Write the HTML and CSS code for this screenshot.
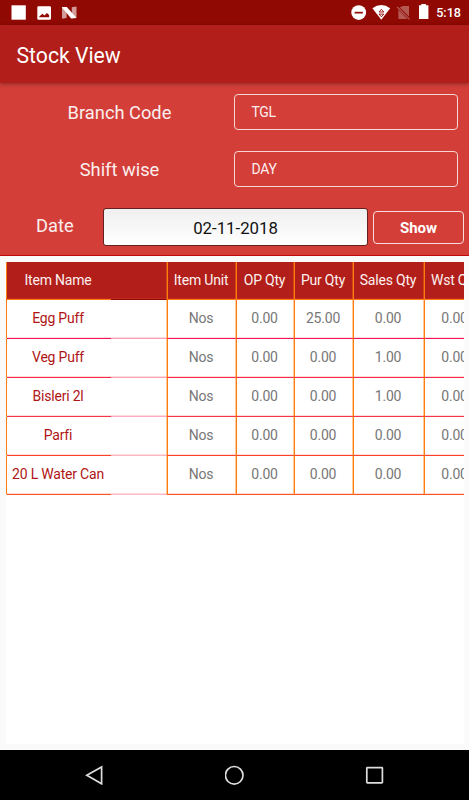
FILE: index.html
```html
<!DOCTYPE html>
<html lang="en">
<head>
  <meta charset="UTF-8" />
  <title>Stock View</title>
  <link rel="stylesheet" href="styles.css">
</head>
<body>
  <div class="status-bar">
    <svg class="status-icons" width="469" height="25" viewBox="0 0 469 25" fill="#fff">
      <path d="M11.5 5.3h14.3v14.4H11.5z" />
      <path fill-rule="evenodd" d="M38.6 6.2h11.1q1.3 0 1.3 1.3v11q0 1.3-1.3 1.3H38.6q-1.3 0-1.3-1.3v-11q0-1.3 1.3-1.3zM39.3 17.3h9.8v-2.2l-2.2-2.2-2.5 2.6-2-1.7-3.1 2.6z" />
      <path opacity=".6" d="M62 7.8l4.6-.8v11L62 18.7zM71.8 7.2l4.7-.7v10.8l-4.7 1z" />
      <path d="M61.6 7l5.2-.1 9.8 11.2-5.4.4z" />
      <circle cx="358.7" cy="12.6" r="7.4" />
      <path d="M354.6 11.8h8.2v1.7h-8.2z" fill="#900902" />
      <path d="M372.4 8.3q8.9-6.4 17.8 0L381.3 19.7z" />
      <path d="M379 12l2.4-2.7 2.4 2.7zM379 14.1l2.4 2.7 2.4-2.7z" fill="none" stroke="#900902" stroke-width=".9" />
      <path opacity=".32" d="M402.5 6h6.5v10.4L399.8 7.6zM398.4 9.8l9 9.2h-9z" />
      <path d="M397.2 7l12.3 12.3" stroke="#b55d58" stroke-width="1.2" />
      <path d="M419 5.2h2.3V4h4.6v1.2h2.5v13.9H419z" />
    </svg>
    <span class="clock">5:18</span>
  </div>

  <div class="app-bar">Stock View</div>

  <div class="form">
    <div class="form-row">
      <label class="label">Branch Code</label>
      <div class="field">TGL</div>
    </div>
    <div class="form-row">
      <label class="label">Shift wise</label>
      <div class="field">DAY</div>
    </div>
    <div class="date-row">
      <label class="date-label">Date</label>
      <div class="date">02-11-2018</div>
      <button class="show">Show</button>
    </div>
  </div>

  <div class="content">
    <div class="stock">
      <div class="row head">
        <div class="name"><span>Item Name</span></div><div>Item Unit</div><div>OP Qty</div><div>Pur Qty</div><div>Sales Qty</div><div>Wst Qty</div>
      </div>
      <div class="row line1">
        <div class="name"><span>Egg Puff</span></div><div>Nos</div><div>0.00</div><div>25.00</div><div>0.00</div><div>0.00</div>
      </div>
      <div class="row line2">
        <div class="name"><span>Veg Puff</span></div><div>Nos</div><div>0.00</div><div>0.00</div><div>1.00</div><div>0.00</div>
      </div>
      <div class="row line3">
        <div class="name"><span>Bisleri 2l</span></div><div>Nos</div><div>0.00</div><div>0.00</div><div>1.00</div><div>0.00</div>
      </div>
      <div class="row line4">
        <div class="name"><span>Parfi</span></div><div>Nos</div><div>0.00</div><div>0.00</div><div>0.00</div><div>0.00</div>
      </div>
      <div class="row line5">
        <div class="name"><span>20 L Water Can</span></div><div>Nos</div><div>0.00</div><div>0.00</div><div>0.00</div><div>0.00</div>
      </div>
    </div>
  </div>

  <div class="nav-bar">
    <svg width="20" height="20" viewBox="0 0 20 20"><path d="M2.8 10.3L17.6 2v16.8z" /></svg>
    <svg width="20" height="20" viewBox="0 0 20 20"><circle cx="9.2" cy="10.3" r="8.8" /></svg>
    <svg width="20" height="20" viewBox="0 0 20 20"><rect x="1.8" y="2.7" width="15.6" height="15.2" rx=".6" /></svg>
  </div>
</body>
</html>
```

FILE: styles.css
```css
* { box-sizing: border-box; }
body { margin: 0; height: 800px; display: flex; flex-direction: column; font-family: Roboto, sans-serif; background: #fafafa; overflow: hidden; }

.status-bar { position: relative; height: 25px; background: #900902; display: flex; align-items: center; justify-content: flex-end; padding-right: 8px; }
.status-icons { position: absolute; left: 0; top: 0; }
.clock { color: #fff; font-size: 12.6px; font-weight: 500; line-height: 25px; }

.app-bar { position: relative; height: 58px; line-height: 61px; padding-left: 16.5px; background: #b21e19; color: #fff; font-size: 21.2px; box-shadow: 0 1px 4px rgba(0,0,0,0.35); }

.form { height: 173px; padding-top: 11px; background: #d33e39; border-bottom: 1px solid #c40808; color: #fbeeee; }
.form-row { display: flex; height: 57px; }
.label { width: 234px; line-height: 38px; padding-left: 5px; text-align: center; font-size: 18.3px; }
.field { width: 224px; height: 36px; line-height: 35px; padding-left: 16.5px; border: 1px solid #f6d5d4; border-radius: 4px; font-size: 14px; letter-spacing: -0.3px; }
.date-row { display: flex; align-items: flex-start; }
.date-label { flex: none; width: 103px; padding-left: 36px; line-height: 36px; font-size: 18.3px; }
.date { flex: none; width: 265px; height: 38px; line-height: 38px; border: 1px solid #63211f; border-radius: 3px; background: linear-gradient(#efefef, #fff); color: #111; text-align: center; font-size: 16.8px; }
.show { flex: none; width: 91px; height: 33px; margin: 3px 0 0 5px; padding: 0; border: 1px solid #f9dddc; border-radius: 4px; background: none; color: #fff; font: bold 15px/33px Roboto, sans-serif; }

.content { flex: 1; padding: 6px 5px 6px 6px; }
.stock { height: 100%; background: #fff; overflow: hidden; }
.row { display: grid; grid-template-columns: 161px 69px 58px 59px 71px 62px; height: 39px; line-height: 37px; color: #777; font-size: 14px; letter-spacing: -0.2px; text-align: center; }
.row > div { padding-right: 2px; border-left: 1px solid #ff7d0c; border-bottom: 1px solid var(--line); box-shadow: -1px 0 rgba(255,125,12,0.4), inset 0 -1px rgba(255,80,60,0.2); white-space: nowrap; }
.row > .name { border-bottom-color: transparent; background: linear-gradient(90deg, var(--line) 105px, var(--faint) 105px) 0 100% / 100% 1px no-repeat border-box; }
.name span { display: block; width: 102px; color: #b01515; }

/* the header keeps its own fill under the first column's line */
.head { height: 38px; line-height: 36px; color: #fdf0ef; background: #b21e19; --line: #ff7a10; --faint: #900902; }
.head .name span { color: inherit; }
.line1 { --line: #f5125d; --faint: #fa9cbd; }
.line2 { --line: #f42b4a; --faint: #f9a2bb; }
.line3 { --line: #f73346; --faint: #fba9c5; }
.line4 { --line: #f9432b; --faint: #fab6c9; }
.line5 { --line: #fb5420; --faint: #fbb8cb; }

.nav-bar { height: 50px; background: #000; display: flex; justify-content: center; align-items: center; gap: 120.5px; }
.nav-bar svg { fill: none; stroke: #ddd; stroke-width: 1.7; }
```
